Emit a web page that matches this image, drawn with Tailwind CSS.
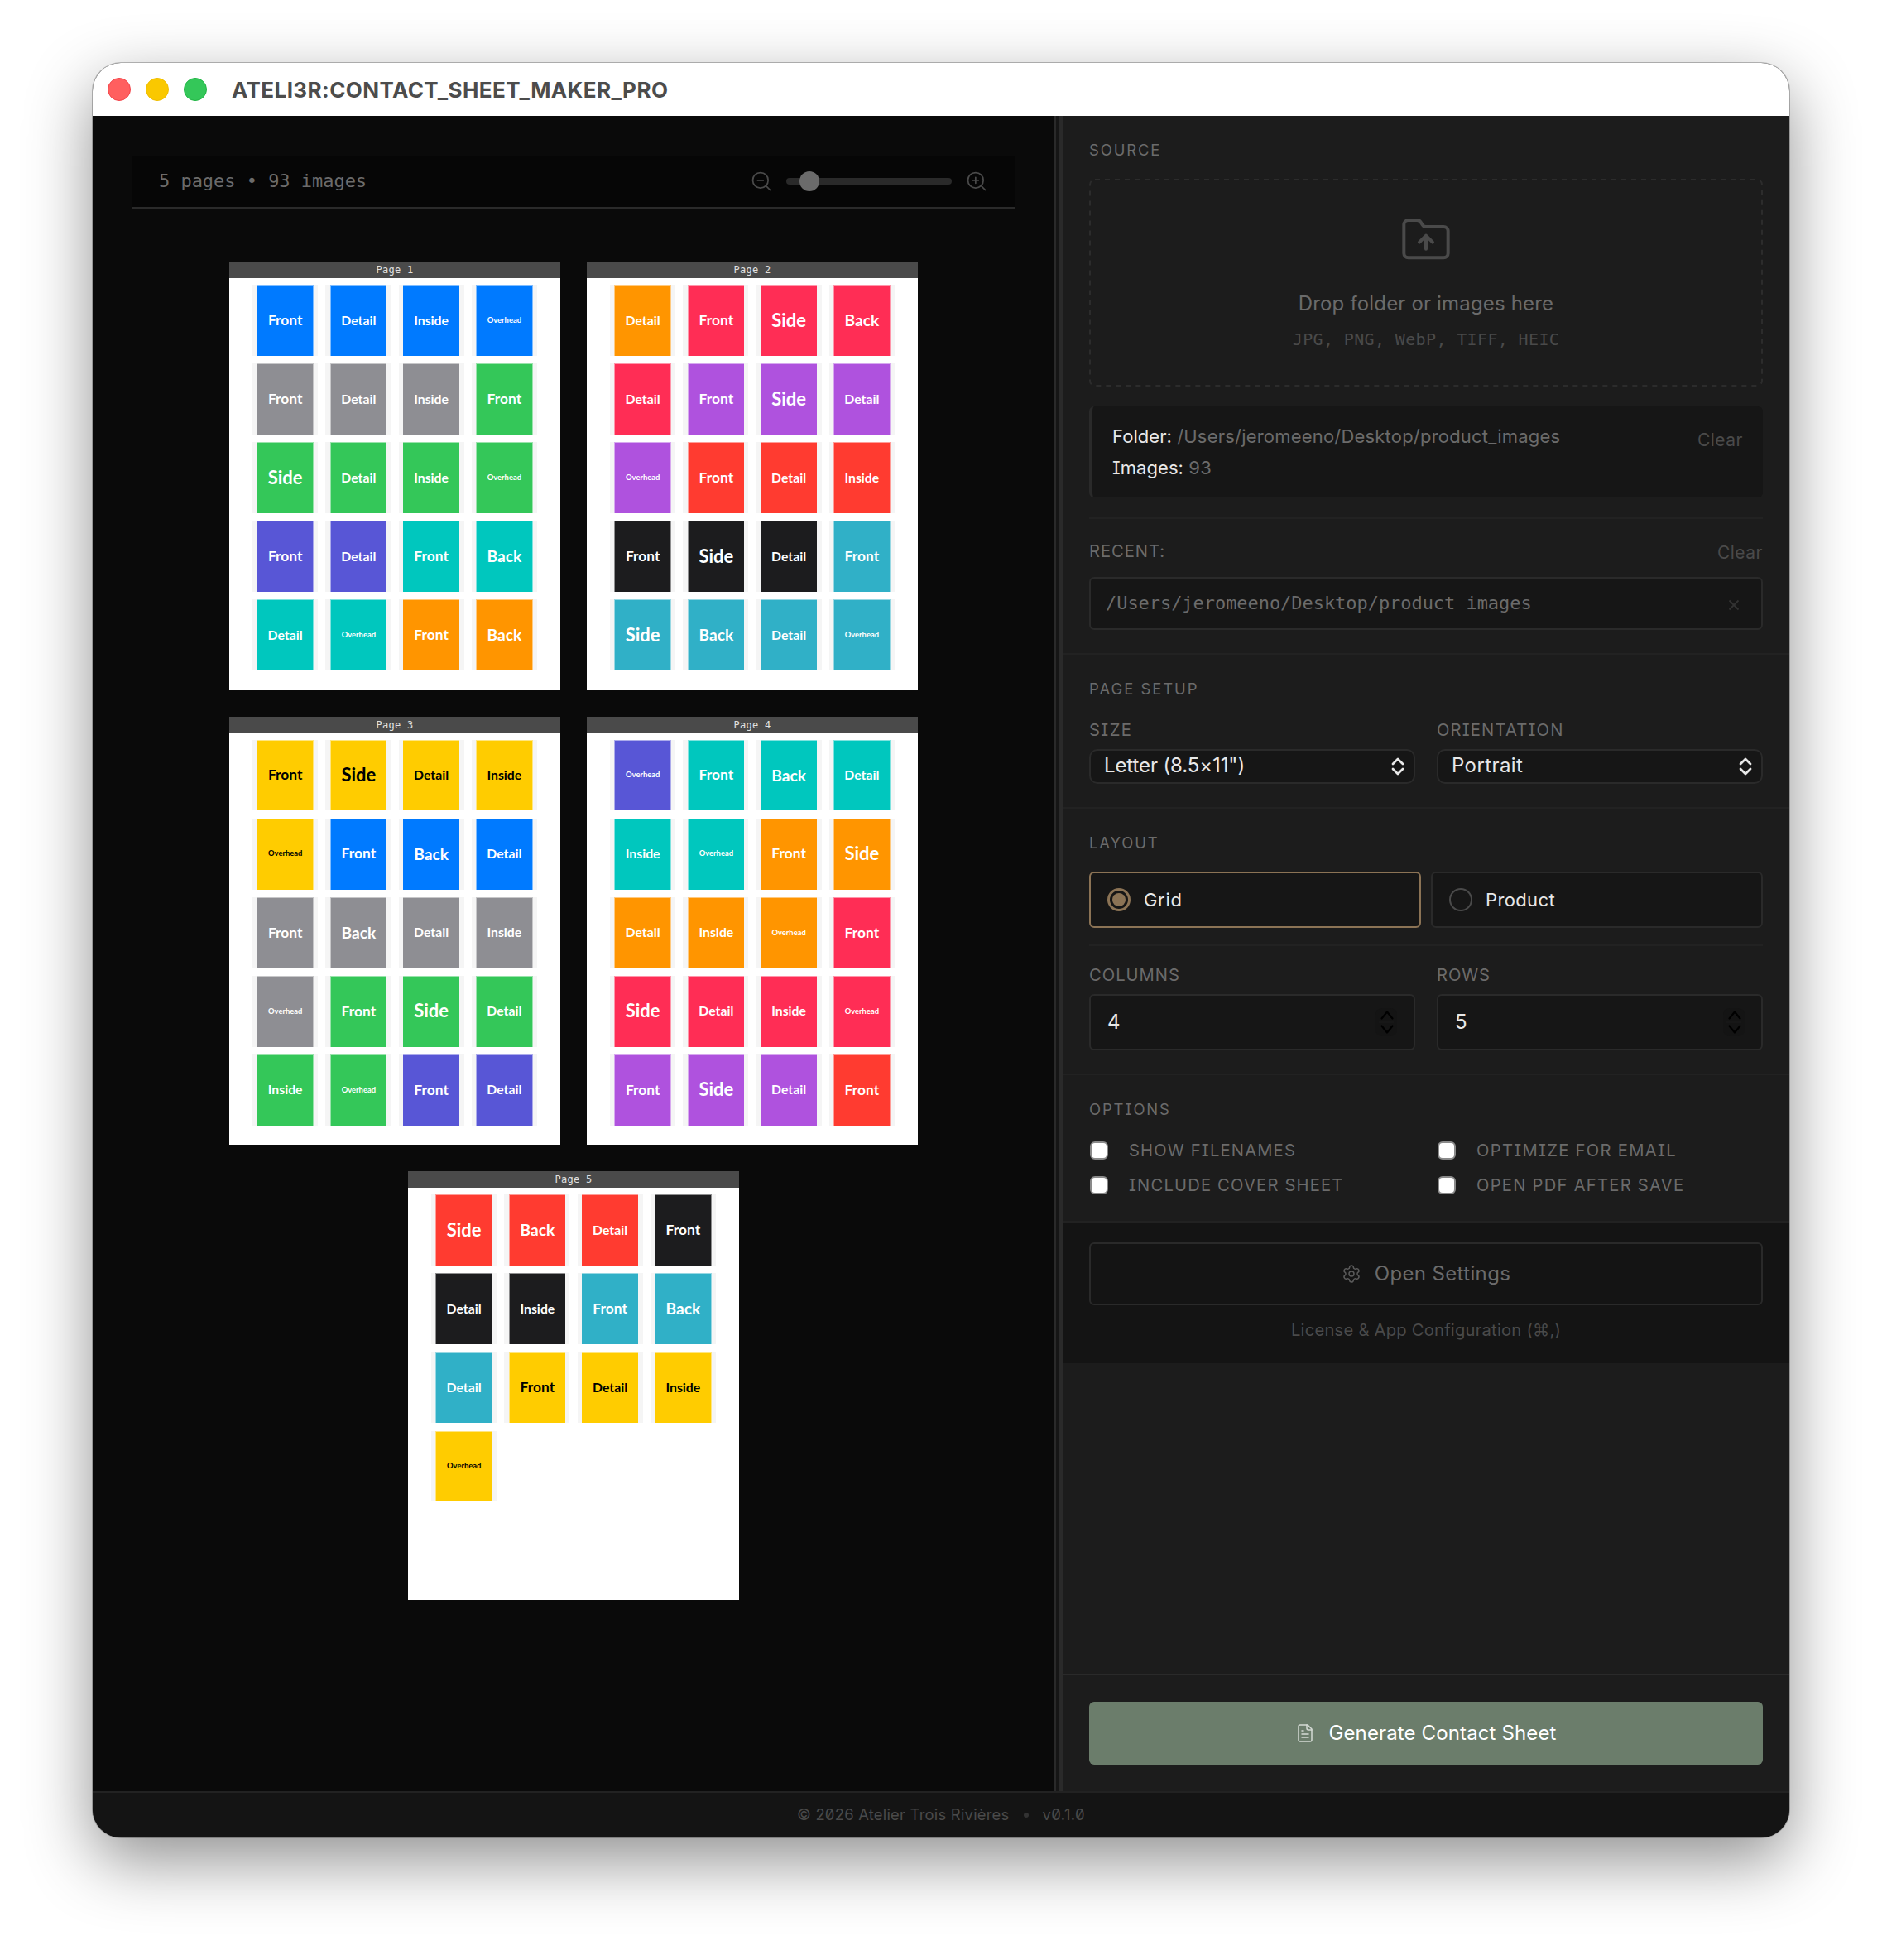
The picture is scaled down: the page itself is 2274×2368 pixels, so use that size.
<!DOCTYPE html>
<html lang="en">
<head>
<meta charset="utf-8">
<title>ATELI3R:CONTACT_SHEET_MAKER_PRO</title>
<script src="https://cdn.jsdelivr.net/npm/@tailwindcss/browser@4"></script>
</head>
<body class="bg-white">
<div class="w-[2274px] h-[2368px] overflow-hidden pt-[76px] pl-[112px]">
  <div class="w-[2050px] h-[2144px] flex flex-col rounded-[34px] overflow-hidden bg-[#0a0a0a] font-[Inter,sans-serif] shadow-[0_0_0_1px_rgba(0,0,0,0.25),0_28px_80px_rgba(0,0,0,0.44)]">

    <!-- Title bar -->
    <header class="h-16 shrink-0 bg-white flex items-center pl-[18px]">
      <div class="flex gap-[18px]">
        <span class="size-7 rounded-full bg-[#ff5f5f] border border-[#f2444a]"></span>
        <span class="size-7 rounded-full bg-[#fac800] border border-[#eebd00]"></span>
        <span class="size-7 rounded-full bg-[#34c759] border border-[#1fb443]"></span>
      </div>
      <h1 class="ml-[30px] pt-0.5 text-[26px] font-bold tracking-[0.42px] text-[#4c4c4c] leading-8">ATELI3R:CONTACT_SHEET_MAKER_PRO</h1>
    </header>

    <div class="flex h-[2024px] shrink-0">
      <!-- Preview pane -->
      <main class="w-[1162px] shrink-0 px-12 pt-12">
        <div class="h-16 px-8 flex items-center justify-between bg-[#060606] border-b-2 border-[#2a2a2a]">
          <span class="pb-0.5 font-['DejaVu_Sans_Mono',monospace] text-[22px] tracking-[-0.03px] text-[#6b6b6b]">5 pages • 93 images</span>
          <div class="flex items-center gap-4">
            <svg class="size-7" viewBox="0 0 24 24" fill="none" stroke="#4a4a4a" stroke-width="1.5" stroke-linecap="round" stroke-linejoin="round"><circle cx="11" cy="11" r="8"/><path d="m21 21-4.35-4.35M8 11h6"/></svg>
            <div class="w-[200px] h-6 flex items-center relative">
              <div class="w-full h-2 rounded-full bg-[#2a2a2a]"></div>
              <div class="absolute left-4 top-0 size-6 rounded-full bg-[#6b6b6b]"></div>
            </div>
            <svg class="size-7" viewBox="0 0 24 24" fill="none" stroke="#4a4a4a" stroke-width="1.5" stroke-linecap="round" stroke-linejoin="round"><circle cx="11" cy="11" r="8"/><path d="m21 21-4.35-4.35M11 8v6M8 11h6"/></svg>
          </div>
        </div>
        <div id="pages" class="mt-16 flex flex-wrap justify-center gap-8 px-[100px]"></div>
      </main>

      <!-- Resize handle -->
      <div class="w-2.5 shrink-0 bg-[#161616] border-l-2 border-r-4 border-[#2a2a2a]"></div>

      <!-- Settings sidebar -->
      <aside class="w-[878px] shrink-0 bg-[#1c1c1c] flex flex-col text-[#6b6b6b] [font-feature-settings:'zero','cv08']">
        <section class="px-8 pt-[29px] pb-7 border-b-2 border-[#222222]">
          <h2 class="text-[18.4px] leading-6 tracking-[1.9px]">SOURCE</h2>
          <div class="relative mt-[23px] h-[251px] flex flex-col items-center pt-[42px]">
            <svg class="absolute inset-0" width="814" height="251" fill="none" stroke="#2c2c2c" stroke-width="2" stroke-dasharray="6 6"><rect x="1" y="1" width="812" height="249" rx="6"/></svg>
            <svg class="size-16" viewBox="0 0 24 24" fill="none" stroke="#4a4a4a" stroke-width="1.5" stroke-linecap="round" stroke-linejoin="round"><path d="M20 20a2 2 0 0 0 2-2V8a2 2 0 0 0-2-2h-7.9a2 2 0 0 1-1.69-.9L9.6 3.9A2 2 0 0 0 7.93 3H4a2 2 0 0 0-2 2v13a2 2 0 0 0 2 2Z"/><path d="M12 10v6M9 13l3-3 3 3"/></svg>
            <p class="mt-[29px] text-[24px] leading-8 tracking-[0.17px]">Drop folder or images here</p>
            <p class="mt-[15px] font-['DejaVu_Sans_Mono',monospace] text-[20px] leading-6 tracking-[0.36px] text-[#4a4a4a]">JPG, PNG, WebP, TIFF, HEIC</p>
          </div>
          <div class="mt-6 h-[110px] bg-[#161616] border-l-4 border-[#2a2a2a] rounded-[6px] px-6 pt-[17px] flex justify-between">
            <div class="text-[22px] leading-[38px]">
              <p><span class="text-[#e8e8e8] tracking-[0.06px]">Folder:</span> <span class="tracking-[0.2px]">/Users/jeromeeno/Desktop/product_images</span></p>
              <p><span class="text-[#e8e8e8] tracking-[0.06px]">Images:</span> <span class="tracking-[0.3px]">93</span></p>
            </div>
            <span class="mt-3 text-[21px] leading-6 tracking-[0.5px] text-[#4a4a4a]">Clear</span>
          </div>
          <div class="mt-6 border-t-2 border-[#222222] pt-[27px] flex justify-between leading-6">
            <h3 class="text-[20.2px] tracking-[0.96px]">RECENT:</h3>
            <span class="text-[21px] tracking-[0.5px] text-[#4a4a4a] pt-0.5 -mb-0.5">Clear</span>
          </div>
          <div class="mt-[19px] h-16 bg-[#161616] border-2 border-[#2a2a2a] rounded-[6px] pl-[18px] pr-[26px] flex items-center justify-between">
            <span class="pb-0.5 font-['DejaVu_Sans_Mono',monospace] text-[22px] tracking-[-0.05px]">/Users/jeromeeno/Desktop/product_images</span>
            <svg class="size-3.5 mt-1" viewBox="0 0 14 14" stroke="#333333" stroke-width="1.8"><path d="M1.5 1.5l11 11M12.5 1.5l-11 11"/></svg>
          </div>
        </section>

        <section class="px-8 pt-[29px] pb-7 border-b-2 border-[#222222]">
          <h2 class="text-[18.4px] leading-6 tracking-[2px]">PAGE SETUP</h2>
          <div class="mt-[26px] grid grid-cols-2 gap-[26px]">
            <div>
              <h3 class="text-[20.2px] leading-6 tracking-[1.4px]">SIZE</h3>
              <div class="mt-[11px] h-[42px] bg-[#161616] border-2 border-[#2a2a2a] rounded-[10px] pl-4 pr-[11px] flex items-center justify-between text-[#e8e8e8]">
                <span class="text-[24px] leading-7 tracking-[-0.11px] -mt-[3px]">Letter (8.5×11")</span>
                <svg width="16" height="22" viewBox="0 0 16 22" fill="none" stroke="#e8e8e8" stroke-width="2.8" stroke-linecap="round" stroke-linejoin="round"><path d="M2 8l6-6 6 6M2 14l6 6 6-6"/></svg>
              </div>
            </div>
            <div>
              <h3 class="text-[20.2px] leading-6 tracking-[1.16px]">ORIENTATION</h3>
              <div class="mt-[11px] h-[42px] bg-[#161616] border-2 border-[#2a2a2a] rounded-[10px] pl-4 pr-[11px] flex items-center justify-between text-[#e8e8e8]">
                <span class="text-[24px] leading-7 tracking-[0.4px] -mt-[3px]">Portrait</span>
                <svg width="16" height="22" viewBox="0 0 16 22" fill="none" stroke="#e8e8e8" stroke-width="2.8" stroke-linecap="round" stroke-linejoin="round"><path d="M2 8l6-6 6 6M2 14l6 6 6-6"/></svg>
              </div>
            </div>
          </div>
        </section>

        <section class="px-8 pt-[29px] pb-7 border-b-2 border-[#222222]">
          <h2 class="text-[18.4px] leading-6 tracking-[1.9px]">LAYOUT</h2>
          <div class="mt-[23px] grid grid-cols-2 gap-3 text-[#e8e8e8] text-[22px]">
            <div class="h-[68px] bg-[#161616] border-2 border-[#8b7355] rounded-[6px] pl-5 flex items-center gap-4">
              <span class="size-7 rounded-full border-[3px] border-[#8b7355] flex items-center justify-center"><span class="size-4 rounded-full bg-[#8b7355]"></span></span>
              <span class="tracking-[0.7px]">Grid</span>
            </div>
            <div class="h-[68px] bg-[#161616] border-2 border-[#2a2a2a] rounded-[6px] pl-5 flex items-center gap-4">
              <span class="size-7 rounded-full border-2 border-[#4a4a4a]"></span>
              <span class="tracking-[0.37px]">Product</span>
            </div>
          </div>
          <div class="mt-5 border-t-2 border-[#222222] pt-[23px] grid grid-cols-2 gap-[26px]">
            <div>
              <h3 class="text-[20.2px] leading-6 tracking-[1px]">COLUMNS</h3>
              <div class="mt-[11px] h-[68px] bg-[#161616] border-2 border-[#2a2a2a] rounded-[6px] px-5 flex items-center justify-between text-[#e8e8e8] text-[24px]">
                <span>4</span>
                <svg width="26" height="34" viewBox="0 0 26 34" fill="none"><rect width="26" height="34" rx="8" fill="#141414"/><path d="M4 17h18" stroke="#1b1b1b"/><path d="M7.5 12.5l6.5-8 6.5 8M7.5 21.5l6.5 8 6.5-8" stroke="#000" stroke-width="2.2" stroke-linecap="round" stroke-linejoin="round"/></svg>
              </div>
            </div>
            <div>
              <h3 class="text-[20.2px] leading-6 tracking-[0.9px]">ROWS</h3>
              <div class="mt-[11px] h-[68px] bg-[#161616] border-2 border-[#2a2a2a] rounded-[6px] px-5 flex items-center justify-between text-[#e8e8e8] text-[24px]">
                <span>5</span>
                <svg width="26" height="34" viewBox="0 0 26 34" fill="none"><rect width="26" height="34" rx="8" fill="#141414"/><path d="M4 17h18" stroke="#1b1b1b"/><path d="M7.5 12.5l6.5-8 6.5 8M7.5 21.5l6.5 8 6.5-8" stroke="#000" stroke-width="2.2" stroke-linecap="round" stroke-linejoin="round"/></svg>
              </div>
            </div>
          </div>
        </section>

        <section class="px-8 pt-[29px] pb-[30px] border-b-2 border-[#222222]">
          <h2 class="text-[18.4px] leading-6 tracking-[1.9px]">OPTIONS</h2>
          <div class="mt-[25px] grid grid-cols-2 gap-x-[26px] gap-y-4 text-[20.2px] leading-[26px]">
            <label class="flex items-center gap-[25px] pl-px"><span class="size-[22px] rounded-[6px] bg-white border-2 border-[#8a8a8a]"></span><span class="tracking-[1.16px]">SHOW FILENAMES</span></label>
            <label class="flex items-center gap-[25px] pl-px"><span class="size-[22px] rounded-[6px] bg-white border-2 border-[#8a8a8a]"></span><span class="tracking-[1.3px]">OPTIMIZE FOR EMAIL</span></label>
            <label class="flex items-center gap-[25px] pl-px"><span class="size-[22px] rounded-[6px] bg-white border-2 border-[#8a8a8a]"></span><span class="tracking-[1.18px]">INCLUDE COVER SHEET</span></label>
            <label class="flex items-center gap-[25px] pl-px"><span class="size-[22px] rounded-[6px] bg-white border-2 border-[#8a8a8a]"></span><span class="tracking-[1.25px]">OPEN PDF AFTER SAVE</span></label>
          </div>
        </section>

        <section class="px-8 pt-6 pb-7 bg-[#141414] flex flex-col items-center">
          <div class="w-full h-[76px] border-2 border-[#2a2a2a] rounded-[6px] flex items-center justify-center gap-4">
            <svg class="size-6" viewBox="0 0 24 24" fill="none" stroke="#5a5a5a" stroke-width="1.5" stroke-linecap="round" stroke-linejoin="round"><path d="M9.671 4.136a2.34 2.34 0 0 1 4.659 0 2.34 2.34 0 0 0 3.319 1.915 2.34 2.34 0 0 1 2.33 4.033 2.34 2.34 0 0 0 0 3.831 2.34 2.34 0 0 1-2.33 4.033 2.34 2.34 0 0 0-3.319 1.915 2.34 2.34 0 0 1-4.659 0 2.34 2.34 0 0 0-3.32-1.915 2.34 2.34 0 0 1-2.33-4.033 2.34 2.34 0 0 0 0-3.831A2.34 2.34 0 0 1 6.35 6.051a2.34 2.34 0 0 0 3.319-1.915"/><circle cx="12" cy="12" r="3"/></svg>
            <span class="text-[24px] tracking-[0.36px]">Open Settings</span>
          </div>
          <p class="mt-[18px] text-[20.2px] leading-6 tracking-[0.22px] text-[#4a4a4a]">License &amp; App Configuration (⌘,)</p>
        </section>

        <div class="mt-auto px-8 py-8 border-t-2 border-[#2a2a2a]">
          <div class="h-[76px] bg-[#6b7d6b] rounded-[6px] flex items-center justify-center gap-4 text-white">
            <svg class="size-6" viewBox="0 0 24 24" fill="none" stroke="#d5dad5" stroke-width="1.5" stroke-linecap="round" stroke-linejoin="round"><path d="M15 2H6a2 2 0 0 0-2 2v16a2 2 0 0 0 2 2h12a2 2 0 0 0 2-2V7Z"/><path d="M14 2v4a2 2 0 0 0 2 2h4M10 9H8M16 13H8M16 17H8"/></svg>
            <span class="text-[24px] tracking-[0.13px]">Generate Contact Sheet</span>
          </div>
        </div>
      </aside>
    </div>

    <!-- Status bar -->
    <footer class="h-14 shrink-0 bg-[#141414] border-t-2 border-[#222222] flex items-center justify-center text-[18.4px] text-[#4a4a4a] [font-feature-settings:'zero','cv08']">
      <span class="tracking-[0.23px]">© 2026 Atelier Trois Rivières</span>
      <span class="mx-[17px] size-1.5 rounded-full bg-[#333333]"></span>
      <span class="tracking-[0.4px]">v0.1.0</span>
    </footer>
  </div>
</div>

<script>
const COLORS = {
  blue: 'bg-[#007aff] text-white', gray: 'bg-[#8e8e93] text-white', green: 'bg-[#34c759] text-white',
  indigo: 'bg-[#5856d6] text-white', teal: 'bg-[#00c7be] text-white', orange: 'bg-[#ff9500] text-white',
  pink: 'bg-[#ff2d55] text-white', purple: 'bg-[#af52de] text-white', red: 'bg-[#ff3b30] text-white',
  black: 'bg-[#1c1c1e] text-white', cyan: 'bg-[#30b0c7] text-white', yellow: 'bg-[#ffcc00] text-black'
};
const SIZES = {
  Front: 'text-[17.4px]', Detail: 'text-[15.8px]', Inside: 'text-[15.8px]',
  Side: 'text-[22px]', Back: 'text-[19.2px]', Overhead: 'text-[9.4px]'
};
// Soft edges of each thumbnail column
const EDGES = ['border-t border-x', 'border-t border-l', 'border-t', 'border-t border-x'];
const PAGES = [
  'blue Front Detail Inside Overhead gray Front Detail Inside green Front Side Detail Inside Overhead indigo Front Detail teal Front Back Detail Overhead orange Front Back',
  'orange Detail pink Front Side Back Detail purple Front Side Detail Overhead red Front Detail Inside black Front Side Detail cyan Front Side Back Detail Overhead',
  'yellow Front Side Detail Inside Overhead blue Front Back Detail gray Front Back Detail Inside Overhead green Front Side Detail Inside Overhead indigo Front Detail',
  'indigo Overhead teal Front Back Detail Inside Overhead orange Front Side Detail Inside Overhead pink Front Side Detail Inside Overhead purple Front Side Detail red Front',
  'red Side Back Detail black Front Detail Inside cyan Front Back Detail yellow Front Detail Inside Overhead'
];
document.getElementById('pages').innerHTML = PAGES.map((spec, i) => {
  let color = '', n = 0;
  const tiles = spec.split(' ').map(word => {
    if (COLORS[word]) { color = COLORS[word]; return ''; }
    const edge = EDGES[n++ % 4];
    return `<div class="h-[85.65px] bg-[#f5f5f5] flex justify-center"><div class="w-[68.5px] h-full pb-0.5 ${edge} border-white/50 ${color} flex items-center justify-center font-bold leading-none ${SIZES[word]}">${word}</div></div>`;
  }).join('');
  return `<article class="w-[400px] h-[517.6px] bg-white">
    <div class="h-5 bg-[#4a4a4a] text-[#e0e0e0] text-center font-['DejaVu_Sans_Mono',monospace] text-[12px] leading-[21px] tracking-[0.3px]">Page ${i + 1}</div>
    <div class="grid grid-cols-4 gap-[9.41px] px-[28.24px] pt-[8.24px] font-[Lato,sans-serif]">${tiles}</div>
  </article>`;
}).join('');
</script>
</body>
</html>
